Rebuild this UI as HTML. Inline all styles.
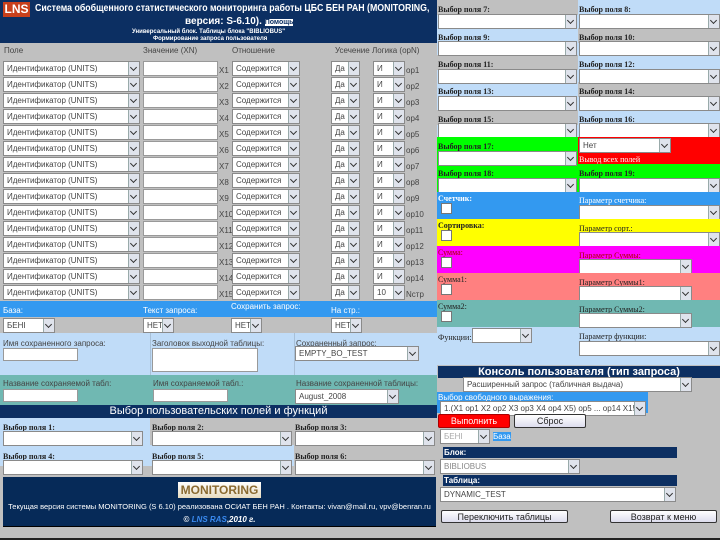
<!DOCTYPE html>
<html><head><meta charset="utf-8">
<style>
*{margin:0;padding:0;box-sizing:border-box}
body{width:720px;height:540px;position:relative;overflow:hidden;background:#c0c0c0;font-family:"Liberation Sans",sans-serif;font-size:9px;color:#222}
div{position:absolute}
.s{background:#fff;border:1px solid #8a8a8a;height:15px;line-height:13px;padding-left:3px;white-space:nowrap;overflow:hidden;color:#444;font-size:8px}
.s::after{content:"";position:absolute;right:0;top:0;width:10px;height:13px;background:#dfe3ec;border-left:1px solid #9aa}
.s::before{content:"";position:absolute;right:3px;top:3px;width:4px;height:4px;border-right:1.5px solid #333;border-bottom:1.5px solid #333;transform:rotate(45deg);z-index:2}
.i{background:#fff;border:1px solid #999;height:15px}
.l{white-space:nowrap;font-size:8px;color:#444}
.b{font-family:"Liberation Serif",serif;font-weight:bold;font-size:8px;color:#222;white-space:nowrap}
.w{color:#fff}
.cb{width:11px;height:11px;background:#fff;border:1px solid #777}
.btn{background:linear-gradient(#fff,#dde);border:1px solid #333;border-radius:2px;text-align:center;font-size:9px;line-height:12px}
</style></head><body>
<!-- header -->
<div style="left:0;top:0;width:437px;height:43px;background:#0c2f62"></div>
<div style="left:3px;top:2px;width:27px;height:15px;background:#c8401c;color:#fff;font-weight:bold;font-size:12px;line-height:15px;text-align:center">LNS</div>
<div class="w" style="left:35px;top:3px;font-weight:bold;font-size:10px;white-space:nowrap;transform:scaleX(0.88);transform-origin:left top">Система обобщенного статистического мониторинга работы ЦБС БЕН РАН (MONITORING,</div>
<div class="w" style="left:185px;top:16px;font-weight:bold;font-size:10px;white-space:nowrap">версия: S-6.10). <span style="background:#fff;color:#0c2f62;font-size:7px">Помощь</span></div>
<div class="w" style="left:132px;top:29px;font-size:6px;font-weight:bold;white-space:nowrap">Универсальный блок. Таблицы блока "BIBLIOBUS"</div>
<div class="w" style="left:153px;top:36px;font-size:6px;font-weight:bold;white-space:nowrap">Формирование запроса пользователя</div>
<div class="l" style="left:4px;top:46px">Поле</div>
<div class="l" style="left:143px;top:46px">Значение (XN)</div>
<div class="l" style="left:232px;top:46px">Отношение</div>
<div class="l" style="left:335px;top:46px">Усечение</div>
<div class="l" style="left:372px;top:46px">Логика (opN)</div>

<div class="s" style="left:3px;top:61px;width:137px">Идентификатор (UNITS)</div><div class="i" style="left:143px;top:61px;width:75px"></div><div class="l" style="left:219px;top:66px">X1</div><div class="s" style="left:232px;top:61px;width:68px">Содержится</div><div class="s" style="left:331px;top:61px;width:29px">Да</div><div class="s" style="left:373px;top:61px;width:32px">И</div><div class="l" style="left:406px;top:66px">op1</div>
<div class="s" style="left:3px;top:77px;width:137px">Идентификатор (UNITS)</div><div class="i" style="left:143px;top:77px;width:75px"></div><div class="l" style="left:219px;top:82px">X2</div><div class="s" style="left:232px;top:77px;width:68px">Содержится</div><div class="s" style="left:331px;top:77px;width:29px">Да</div><div class="s" style="left:373px;top:77px;width:32px">И</div><div class="l" style="left:406px;top:82px">op2</div>
<div class="s" style="left:3px;top:93px;width:137px">Идентификатор (UNITS)</div><div class="i" style="left:143px;top:93px;width:75px"></div><div class="l" style="left:219px;top:98px">X3</div><div class="s" style="left:232px;top:93px;width:68px">Содержится</div><div class="s" style="left:331px;top:93px;width:29px">Да</div><div class="s" style="left:373px;top:93px;width:32px">И</div><div class="l" style="left:406px;top:98px">op3</div>
<div class="s" style="left:3px;top:109px;width:137px">Идентификатор (UNITS)</div><div class="i" style="left:143px;top:109px;width:75px"></div><div class="l" style="left:219px;top:114px">X4</div><div class="s" style="left:232px;top:109px;width:68px">Содержится</div><div class="s" style="left:331px;top:109px;width:29px">Да</div><div class="s" style="left:373px;top:109px;width:32px">И</div><div class="l" style="left:406px;top:114px">op4</div>
<div class="s" style="left:3px;top:125px;width:137px">Идентификатор (UNITS)</div><div class="i" style="left:143px;top:125px;width:75px"></div><div class="l" style="left:219px;top:130px">X5</div><div class="s" style="left:232px;top:125px;width:68px">Содержится</div><div class="s" style="left:331px;top:125px;width:29px">Да</div><div class="s" style="left:373px;top:125px;width:32px">И</div><div class="l" style="left:406px;top:130px">op5</div>
<div class="s" style="left:3px;top:141px;width:137px">Идентификатор (UNITS)</div><div class="i" style="left:143px;top:141px;width:75px"></div><div class="l" style="left:219px;top:146px">X6</div><div class="s" style="left:232px;top:141px;width:68px">Содержится</div><div class="s" style="left:331px;top:141px;width:29px">Да</div><div class="s" style="left:373px;top:141px;width:32px">И</div><div class="l" style="left:406px;top:146px">op6</div>
<div class="s" style="left:3px;top:157px;width:137px">Идентификатор (UNITS)</div><div class="i" style="left:143px;top:157px;width:75px"></div><div class="l" style="left:219px;top:162px">X7</div><div class="s" style="left:232px;top:157px;width:68px">Содержится</div><div class="s" style="left:331px;top:157px;width:29px">Да</div><div class="s" style="left:373px;top:157px;width:32px">И</div><div class="l" style="left:406px;top:162px">op7</div>
<div class="s" style="left:3px;top:173px;width:137px">Идентификатор (UNITS)</div><div class="i" style="left:143px;top:173px;width:75px"></div><div class="l" style="left:219px;top:178px">X8</div><div class="s" style="left:232px;top:173px;width:68px">Содержится</div><div class="s" style="left:331px;top:173px;width:29px">Да</div><div class="s" style="left:373px;top:173px;width:32px">И</div><div class="l" style="left:406px;top:178px">op8</div>
<div class="s" style="left:3px;top:189px;width:137px">Идентификатор (UNITS)</div><div class="i" style="left:143px;top:189px;width:75px"></div><div class="l" style="left:219px;top:194px">X9</div><div class="s" style="left:232px;top:189px;width:68px">Содержится</div><div class="s" style="left:331px;top:189px;width:29px">Да</div><div class="s" style="left:373px;top:189px;width:32px">И</div><div class="l" style="left:406px;top:194px">op9</div>
<div class="s" style="left:3px;top:205px;width:137px">Идентификатор (UNITS)</div><div class="i" style="left:143px;top:205px;width:75px"></div><div class="l" style="left:219px;top:210px">X10</div><div class="s" style="left:232px;top:205px;width:68px">Содержится</div><div class="s" style="left:331px;top:205px;width:29px">Да</div><div class="s" style="left:373px;top:205px;width:32px">И</div><div class="l" style="left:406px;top:210px">op10</div>
<div class="s" style="left:3px;top:221px;width:137px">Идентификатор (UNITS)</div><div class="i" style="left:143px;top:221px;width:75px"></div><div class="l" style="left:219px;top:226px">X11</div><div class="s" style="left:232px;top:221px;width:68px">Содержится</div><div class="s" style="left:331px;top:221px;width:29px">Да</div><div class="s" style="left:373px;top:221px;width:32px">И</div><div class="l" style="left:406px;top:226px">op11</div>
<div class="s" style="left:3px;top:237px;width:137px">Идентификатор (UNITS)</div><div class="i" style="left:143px;top:237px;width:75px"></div><div class="l" style="left:219px;top:242px">X12</div><div class="s" style="left:232px;top:237px;width:68px">Содержится</div><div class="s" style="left:331px;top:237px;width:29px">Да</div><div class="s" style="left:373px;top:237px;width:32px">И</div><div class="l" style="left:406px;top:242px">op12</div>
<div class="s" style="left:3px;top:253px;width:137px">Идентификатор (UNITS)</div><div class="i" style="left:143px;top:253px;width:75px"></div><div class="l" style="left:219px;top:258px">X13</div><div class="s" style="left:232px;top:253px;width:68px">Содержится</div><div class="s" style="left:331px;top:253px;width:29px">Да</div><div class="s" style="left:373px;top:253px;width:32px">И</div><div class="l" style="left:406px;top:258px">op13</div>
<div class="s" style="left:3px;top:269px;width:137px">Идентификатор (UNITS)</div><div class="i" style="left:143px;top:269px;width:75px"></div><div class="l" style="left:219px;top:274px">X14</div><div class="s" style="left:232px;top:269px;width:68px">Содержится</div><div class="s" style="left:331px;top:269px;width:29px">Да</div><div class="s" style="left:373px;top:269px;width:32px">И</div><div class="l" style="left:406px;top:274px">op14</div>
<div class="s" style="left:3px;top:285px;width:137px">Идентификатор (UNITS)</div><div class="i" style="left:143px;top:285px;width:75px"></div><div class="l" style="left:219px;top:290px">X15</div><div class="s" style="left:232px;top:285px;width:68px">Содержится</div><div class="s" style="left:331px;top:285px;width:29px">Да</div><div class="s" style="left:373px;top:285px;width:32px">10</div><div class="l" style="left:406px;top:290px">Nстр</div>

<!-- blue bar -->
<div style="left:0;top:301px;width:437px;height:16px;background:#3399f0"></div>
<div class="l w" style="left:3px;top:306px">База:</div>
<div class="l w" style="left:143px;top:306px">Текст запроса:</div>
<div class="l w" style="left:231px;top:302px">Сохранить запрос:</div>
<div class="l w" style="left:331px;top:306px">На стр.:</div>
<div class="s" style="left:3px;top:318px;width:52px">БЕНІ</div>
<div class="s" style="left:143px;top:318px;width:31px">НЕТ</div>
<div class="s" style="left:231px;top:318px;width:31px">НЕТ</div>
<div class="s" style="left:331px;top:318px;width:31px">НЕТ</div>
<!-- light blue -->
<div style="left:0;top:333px;width:437px;height:42px;background:#c0dcf8"></div>
<div style="left:150px;top:333px;width:1px;height:42px;background:#a8c0d8"></div>
<div style="left:294px;top:333px;width:1px;height:42px;background:#a8c0d8"></div>
<div class="l" style="left:3px;top:339px">Имя сохраненного запроса:</div>
<div class="i" style="left:3px;top:348px;width:75px;height:13px"></div>
<div class="l" style="left:152px;top:339px">Заголовок выходной таблицы:</div>
<div class="i" style="left:152px;top:348px;width:106px;height:24px"></div>
<div class="l" style="left:296px;top:339px">Сохраненный запрос:</div>
<div class="s" style="left:295px;top:346px;width:124px">EMPTY_BO_TEST</div>
<!-- teal -->
<div style="left:0;top:375px;width:437px;height:30px;background:#70b8b2"></div>
<div class="l" style="left:3px;top:379px">Название сохраняемой табл:</div>
<div class="i" style="left:3px;top:389px;width:75px;height:13px"></div>
<div class="l" style="left:153px;top:379px">Имя сохраняемой табл.:</div>
<div class="i" style="left:153px;top:389px;width:75px;height:13px"></div>
<div class="l" style="left:296px;top:379px">Название сохраненной таблицы:</div>
<div class="s" style="left:295px;top:389px;width:104px">August_2008</div>
<!-- navy bar -->
<div style="left:0;top:405px;width:437px;height:13px;background:#0c2f62"></div>
<div class="w" style="left:0;top:405px;width:437px;text-align:center;font-size:11px;line-height:13px">Выбор пользовательских полей и функций</div>
<div style="left:0;top:418px;width:150px;height:48px;background:#c0dcf8"></div>
<div style="left:150px;top:445px;width:144px;height:21px;background:#c0dcf8"></div>
<div class="b" style="left:3px;top:423px">Выбор поля 1:</div>
<div class="b" style="left:152px;top:423px">Выбор поля 2:</div>
<div class="b" style="left:295px;top:423px">Выбор поля 3:</div>
<div class="s" style="left:3px;top:431px;width:140px"></div>
<div class="s" style="left:152px;top:431px;width:140px"></div>
<div class="s" style="left:295px;top:431px;width:140px"></div>
<div class="b" style="left:3px;top:452px">Выбор поля 4:</div>
<div class="b" style="left:152px;top:452px">Выбор поля 5:</div>
<div class="b" style="left:295px;top:452px">Выбор поля 6:</div>
<div class="s" style="left:3px;top:460px;width:140px"></div>
<div class="s" style="left:152px;top:460px;width:140px"></div>
<div class="s" style="left:295px;top:460px;width:140px"></div>
<!-- footer -->
<div style="left:3px;top:477px;width:433px;height:50px;background:#062a58;border-bottom:1px solid #000"></div>
<div style="left:178px;top:482px;width:83px;height:16px;background:linear-gradient(#fff,#e8dcc0);color:#8a6a30;font-weight:bold;font-size:12px;text-align:center;line-height:16px">MONITORING</div>
<div class="w" style="left:3px;top:502px;width:433px;text-align:center;font-size:7.5px;white-space:nowrap">Текущая версия системы MONITORING (S 6.10) реализована ОСИАТ БЕН РАН . Контакты: vivan@mail.ru, vpv@benran.ru</div>
<div class="w" style="left:3px;top:515px;width:433px;text-align:center;font-size:8px;font-weight:bold">© <i style="color:#3a8af0">LNS RAS</i>,<i>2010 г.</i></div>
<div style="left:0;top:538px;width:720px;height:2px;background:#222"></div>

<!-- right panel -->
<div style="left:437px;top:0;width:283px;height:365px;background:#c0dcf8"></div>
<div style="left:437px;top:0;width:141px;height:15px;background:#c0c0c0"></div>
<div style="left:578px;top:28px;width:142px;height:15px;background:#c0c0c0"></div>
<div style="left:437px;top:55px;width:141px;height:15px;background:#c0c0c0"></div>
<div style="left:578px;top:82px;width:142px;height:15px;background:#c0c0c0"></div>
<div style="left:437px;top:110px;width:141px;height:15px;background:#c0c0c0"></div>
<div class="b" style="left:438px;top:5px">Выбор поля 7:</div><div class="b" style="left:579px;top:5px">Выбор поля 8:</div>
<div class="s" style="left:438px;top:14px;width:139px"></div><div class="s" style="left:579px;top:14px;width:141px"></div>
<div class="b" style="left:438px;top:33px">Выбор поля 9:</div><div class="b" style="left:579px;top:33px">Выбор поля 10:</div>
<div class="s" style="left:438px;top:41px;width:139px"></div><div class="s" style="left:579px;top:41px;width:141px"></div>
<div class="b" style="left:438px;top:60px">Выбор поля 11:</div><div class="b" style="left:579px;top:60px">Выбор поля 12:</div>
<div class="s" style="left:438px;top:69px;width:139px"></div><div class="s" style="left:579px;top:69px;width:141px"></div>
<div class="b" style="left:438px;top:87px">Выбор поля 13:</div><div class="b" style="left:579px;top:87px">Выбор поля 14:</div>
<div class="s" style="left:438px;top:96px;width:139px"></div><div class="s" style="left:579px;top:96px;width:141px"></div>
<div class="b" style="left:438px;top:115px">Выбор поля 15:</div><div class="b" style="left:579px;top:115px">Выбор поля 16:</div>
<div class="s" style="left:438px;top:123px;width:139px"></div><div class="s" style="left:579px;top:123px;width:141px"></div>
<!-- green/red -->
<div style="left:437px;top:137px;width:141px;height:55px;background:#00ff00"></div>
<div style="left:578px;top:137px;width:142px;height:27px;background:#ff0000"></div>
<div style="left:578px;top:164px;width:142px;height:28px;background:#00ff00"></div>
<div class="b" style="left:438px;top:142px">Выбор поля 17:</div>
<div class="s" style="left:438px;top:151px;width:139px"></div>
<div class="s" style="left:579px;top:138px;width:92px">Нет</div>
<div class="b w" style="left:579px;top:155px;font-weight:normal">Вывод всех полей</div>
<div class="b" style="left:438px;top:169px">Выбор поля 18:</div><div class="b" style="left:579px;top:169px">Выбор поля 19:</div>
<div class="s" style="left:438px;top:178px;width:139px"></div><div class="s" style="left:579px;top:178px;width:141px"></div>
<!-- colored -->
<div style="left:437px;top:192px;width:283px;height:27px;background:#3399f0"></div>
<div class="b w" style="left:438px;top:194px">Счетчик:</div><div class="cb" style="left:441px;top:203px"></div>
<div class="b w" style="left:579px;top:196px;font-weight:normal">Параметр счетчика:</div>
<div class="s" style="left:579px;top:205px;width:141px"></div>
<div style="left:437px;top:219px;width:283px;height:27px;background:#ffff00"></div>
<div class="b" style="left:438px;top:221px">Сортировка:</div><div class="cb" style="left:441px;top:230px"></div>
<div class="b" style="left:579px;top:224px;font-weight:normal">Параметр сорт.:</div>
<div class="s" style="left:579px;top:232px;width:141px"></div>
<div style="left:437px;top:246px;width:283px;height:27px;background:#ff00ff"></div>
<div class="b" style="left:438px;top:248px;font-weight:normal;color:#a00">Сумма:</div><div class="cb" style="left:441px;top:257px"></div>
<div class="b" style="left:579px;top:251px;font-weight:normal;color:#a00">Параметр Суммы:</div>
<div class="s" style="left:579px;top:259px;width:113px"></div>
<div style="left:437px;top:273px;width:283px;height:27px;background:#ff8080"></div>
<div class="b" style="left:438px;top:275px;font-weight:normal">Сумма1:</div><div class="cb" style="left:441px;top:284px"></div>
<div class="b" style="left:579px;top:278px;font-weight:normal">Параметр Суммы1:</div>
<div class="s" style="left:579px;top:286px;width:113px"></div>
<div style="left:437px;top:300px;width:283px;height:27px;background:#70b8b2"></div>
<div class="b" style="left:438px;top:302px;font-weight:normal">Сумма2:</div><div class="cb" style="left:441px;top:311px"></div>
<div class="b" style="left:579px;top:305px;font-weight:normal">Параметр Суммы2:</div>
<div class="s" style="left:579px;top:313px;width:113px"></div>
<div class="b" style="left:438px;top:333px;font-weight:normal">Функции:</div>
<div class="s" style="left:472px;top:328px;width:60px"></div>
<div class="b" style="left:579px;top:332px;font-weight:normal">Параметр функции:</div>
<div class="s" style="left:579px;top:341px;width:141px"></div>
<!-- console -->
<div style="left:438px;top:366px;width:282px;height:12px;background:#0c2f62"></div>
<div class="w" style="left:438px;top:366px;width:282px;text-align:center;font-size:11px;line-height:12px;font-weight:bold">Консоль пользователя (тип запроса)</div>
<div class="s" style="left:463px;top:377px;width:229px">Расширенный запрос (табличная выдача)</div>
<div style="left:437px;top:392px;width:211px;height:21px;background:#3399f0"></div>
<div class="l w" style="left:438px;top:393px">Выбор свободного выражения:</div>
<div class="s" style="left:440px;top:401px;width:206px">1.(X1 op1 X2 op2 X3 op3 X4 op4 X5) op5 ... op14 X15)</div>
<div class="btn" style="left:438px;top:414px;width:72px;height:14px;background:#ff0000;color:#fff;border-color:#a00">Выполнить</div>
<div class="btn" style="left:514px;top:414px;width:72px;height:14px">Сброс</div>
<div class="s" style="left:440px;top:429px;width:50px;color:#aaa">БЕНІ</div>
<div class="l" style="left:493px;top:432px;background:#3399f0;color:#fff">База</div>
<div style="left:443px;top:447px;width:234px;height:11px;background:#0c2f62"></div>
<div class="l w" style="left:444px;top:448px;font-weight:bold">Блок:</div>
<div class="s" style="left:440px;top:459px;width:140px;color:#888">BIBLIOBUS</div>
<div style="left:443px;top:475px;width:234px;height:11px;background:#0c2f62"></div>
<div class="l w" style="left:444px;top:476px;font-weight:bold">Таблица:</div>
<div class="s" style="left:440px;top:487px;width:236px">DYNAMIC_TEST</div>
<div class="btn" style="left:441px;top:510px;width:127px;height:13px">Переключить таблицы</div>
<div class="btn" style="left:610px;top:510px;width:107px;height:13px">Возврат к меню</div>
</body></html>
